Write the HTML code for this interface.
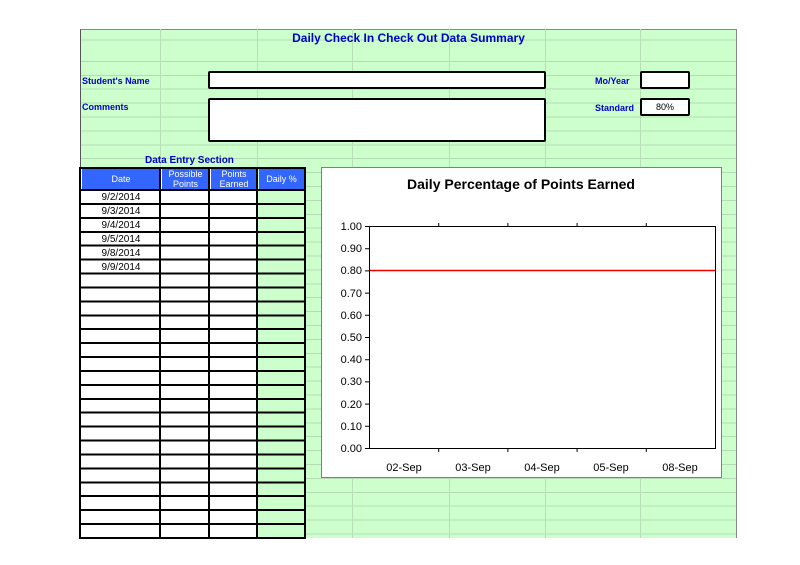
<!DOCTYPE html>
<html><head><meta charset="utf-8"><style>
body{margin:0;width:800px;height:565px;background:#fff;position:relative;overflow:hidden;font-family:"Liberation Sans",sans-serif}
.a{position:absolute}
#g{left:80px;top:29px;width:657px;height:509px;background:#ccffcc;border-top:1px solid #888;border-right:1px solid #888;border-left:1px solid #555;box-sizing:border-box;
background-image:repeating-linear-gradient(to bottom,transparent 0,transparent 12.9px,#b4dcb4 12.9px,#b4dcb4 13.9px);background-position:0 18px}
.vl{position:absolute;top:29px;height:509px;width:1px;background:#b8ddb8}
.lbl{color:#0000cc;font-weight:bold;font-size:9px}
.box{background:#fff;border:2px solid #000;border-radius:2px;box-sizing:border-box}
#t{left:80px;top:167px;width:226px;height:372px;background:linear-gradient(to right,#fff 0,#fff 177px,#ccffcc 177px)}
#rows{left:80px;top:189px;width:226px;height:350px;background:repeating-linear-gradient(to bottom,#000 0,#000 2px,transparent 2px,transparent 13.92px)}
.v{position:absolute;top:167px;height:372px;width:2px;background:#000}
.hd{position:absolute;top:167px;height:23px;background:#3366ff;color:#fff;font-size:9px;text-align:center;line-height:10px;display:flex;align-items:center;justify-content:center}
.d{position:absolute;left:82px;width:78px;text-align:center;font-size:10px;line-height:12px}
</style></head><body>
<div class="a" id="g"></div>
<div class="vl" style="left:160px"></div><div class="vl" style="left:257px"></div><div class="vl" style="left:352px"></div><div class="vl" style="left:449px"></div><div class="vl" style="left:545px"></div><div class="vl" style="left:640px"></div>
<div class="a" style="left:80px;top:31px;width:657px;text-align:center;color:#0000cc;font-weight:bold;font-size:12px">Daily Check In Check Out Data Summary</div>
<div class="a lbl" style="left:82px;top:76px">Student's Name</div>
<div class="a lbl" style="left:82px;top:102px">Comments</div>
<div class="a box" style="left:208px;top:71px;width:338px;height:18px"></div>
<div class="a box" style="left:208px;top:98px;width:338px;height:44px"></div>
<div class="a lbl" style="left:595px;top:76px">Mo/Year</div>
<div class="a lbl" style="left:595px;top:103px">Standard</div>
<div class="a box" style="left:640px;top:71px;width:50px;height:18px"></div>
<div class="a box" style="left:640px;top:98px;width:50px;height:18px;font-size:9px;text-align:center;line-height:14px">80%</div>
<div class="a lbl" style="left:145px;top:155px;font-size:10px">Data Entry Section</div>
<div class="a" id="t"></div>
<div class="hd" style="left:82px;width:78px">Date</div>
<div class="hd" style="left:162px;width:47px">Possible<br>Points</div>
<div class="hd" style="left:211px;width:46px">Points<br>Earned</div>
<div class="hd" style="left:259px;width:45px">Daily %</div>
<div class="a" id="rows"></div>
<div class="a" style="left:80px;top:167px;width:226px;height:2px;background:#000"></div>
<div class="a" style="left:80px;top:537px;width:226px;height:2px;background:#000"></div>
<div class="v" style="left:79px"></div><div class="v" style="left:159px"></div><div class="v" style="left:208px"></div><div class="v" style="left:256px"></div><div class="v" style="left:304px"></div>
<div class="d" style="top:192px">9/2/2014</div>
<div class="d" style="top:206px">9/3/2014</div>
<div class="d" style="top:220px">9/4/2014</div>
<div class="d" style="top:234px">9/5/2014</div>
<div class="d" style="top:248px">9/8/2014</div>
<div class="d" style="top:262px">9/9/2014</div>
<svg class="a" style="left:321px;top:167px" width="401" height="311" font-family="Liberation Sans,sans-serif">
<rect x="0.5" y="0.5" width="400" height="310" fill="#fff" stroke="#808080"/>
<text x="200" y="22" text-anchor="middle" font-size="14" font-weight="bold" fill="#000">Daily Percentage of Points Earned</text>
<g stroke="#000" stroke-width="1" fill="none">
<path d="M48.5 59V281.5H394.5V59.5H48.5"/>
<path d="M44 59.5h4M44 81.7h4M44 103.9h4M44 126.1h4M44 148.3h4M44 170.5h4M44 192.7h4M44 214.9h4M44 237.1h4M44 259.3h4M44 281.5h4"/>
<path d="M117.7 281v4M186.9 281v4M256.1 281v4M325.3 281v4M117.7 59v-3M186.9 59v-3M256.1 59v-3M325.3 59v-3"/>
</g>
<line x1="49" y1="103.5" x2="394" y2="103.5" stroke="#e00" stroke-width="1.6"/>
<g font-size="11" text-anchor="end" fill="#000">
<text x="41" y="63">1.00</text><text x="41" y="85">0.90</text><text x="41" y="107">0.80</text><text x="41" y="130">0.70</text><text x="41" y="152">0.60</text><text x="41" y="174">0.50</text><text x="41" y="196">0.40</text><text x="41" y="218">0.30</text><text x="41" y="241">0.20</text><text x="41" y="263">0.10</text><text x="41" y="285">0.00</text>
</g>
<g font-size="11" text-anchor="middle" fill="#000">
<text x="83" y="304">02-Sep</text><text x="152" y="304">03-Sep</text><text x="221" y="304">04-Sep</text><text x="290" y="304">05-Sep</text><text x="359" y="304">08-Sep</text>
</g>
</svg>
</body></html>
